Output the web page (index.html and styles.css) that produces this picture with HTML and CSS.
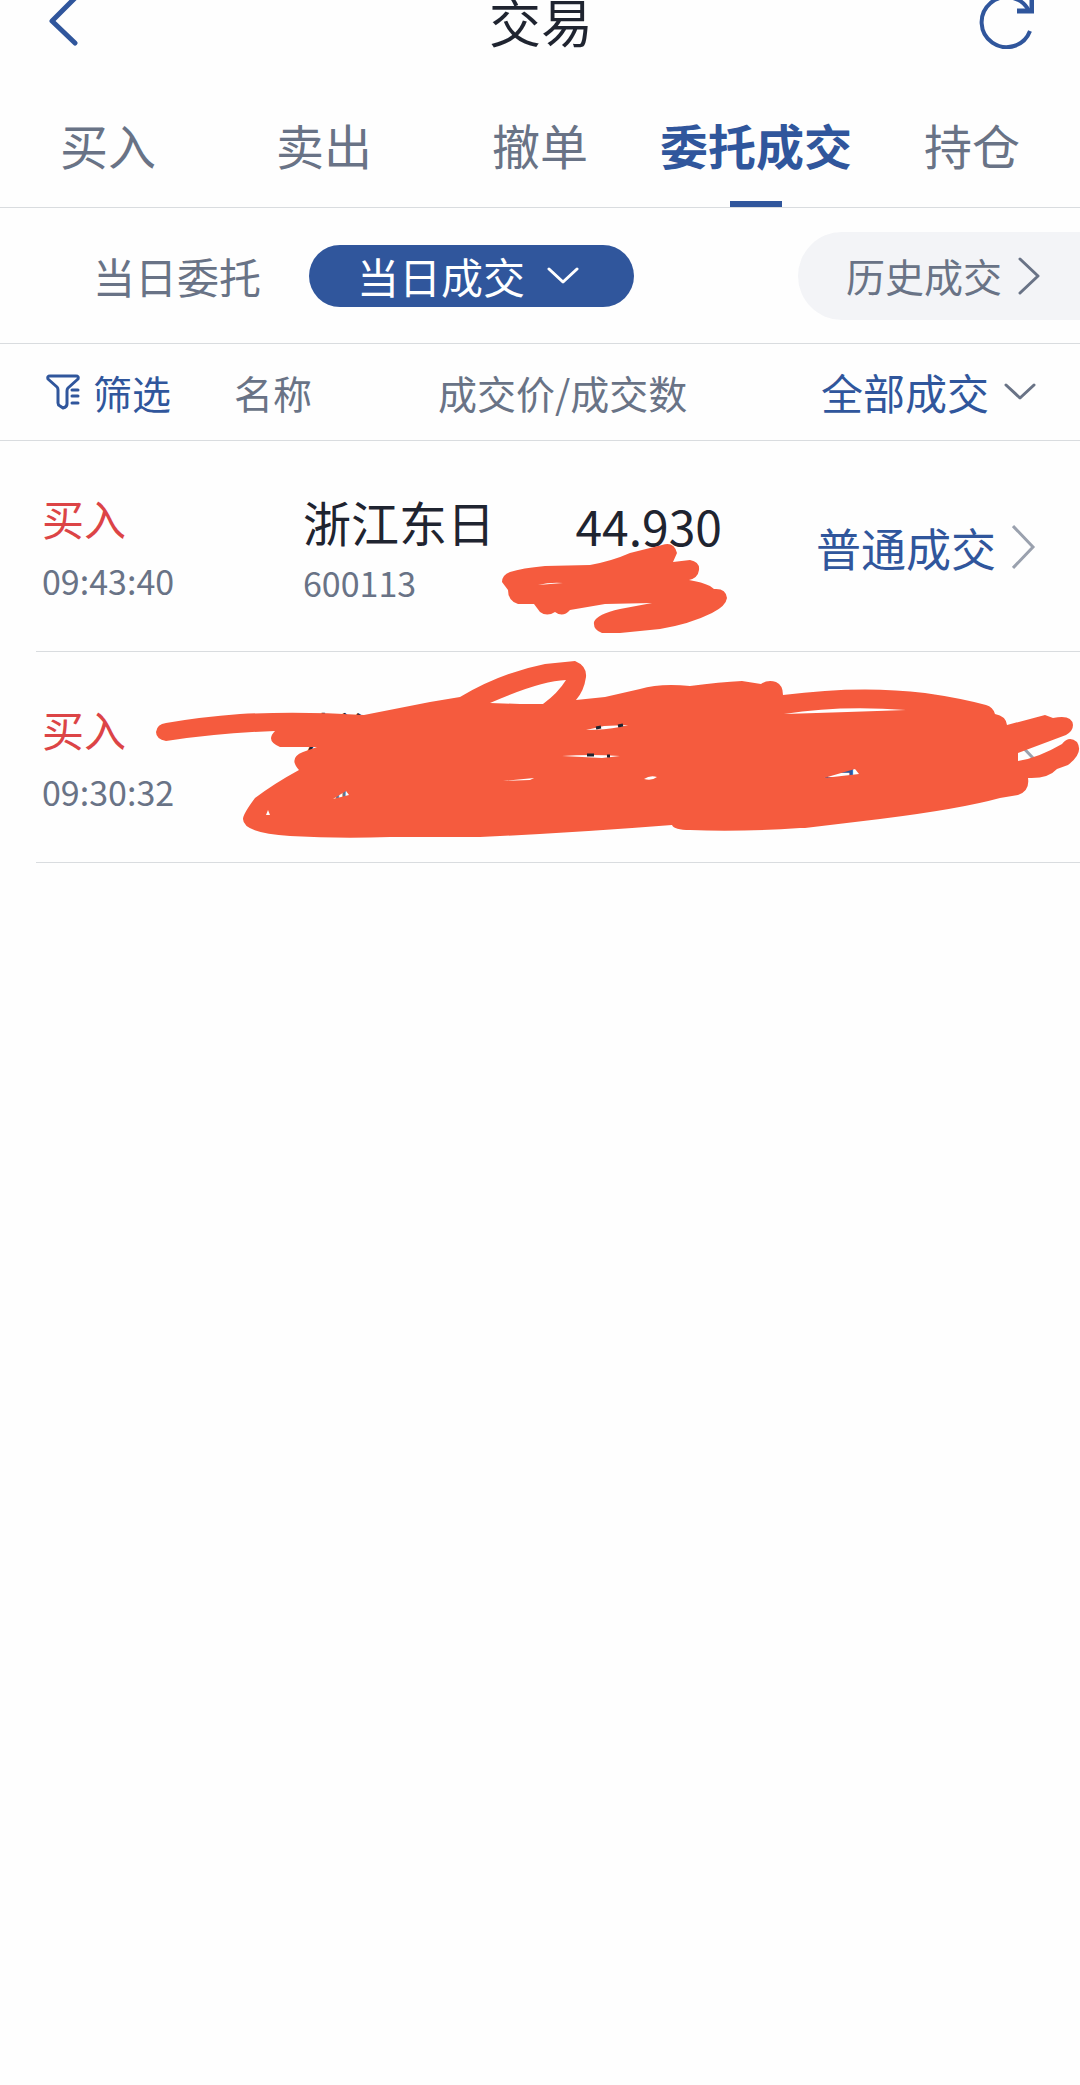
FILE: index.html
```
<!DOCTYPE html>
<html lang="zh-CN">
<head>
    <meta charset="UTF-8">
    <meta name="viewport" content="width=device-width, initial-scale=1.0">
    <title>交易</title>
    <link rel="stylesheet" href="styles.css">
</head>
<body>
    <header class="header">
        <button class="icon-btn" aria-label="返回">
            <svg width="30" height="52" viewBox="0 0 30 52" fill="none" stroke="currentColor" stroke-width="5" stroke-linecap="round" stroke-linejoin="round"><path d="M27 3L4 26l23 22"/></svg>
        </button>
        <h1>交易</h1>
        <button class="icon-btn" aria-label="刷新">
            <svg width="56" height="56" viewBox="0 0 56 56" fill="none" stroke="currentColor" stroke-width="4"><path d="M52 38A25 25 0 1 1 51 18"/><path d="M54 4v14H39" stroke-width="5"/></svg>
        </button>
    </header>

    <nav class="tabs">
        <a href="#">买入</a>
        <a href="#">卖出</a>
        <a href="#">撤单</a>
        <a href="#" class="active">委托成交</a>
        <a href="#">持仓</a>
    </nav>

    <div class="switcher">
        <button class="switch-btn">当日委托</button>
        <button class="switch-btn active">
            当日成交
            <svg width="32" height="18" viewBox="0 0 32 18" fill="none" stroke="currentColor" stroke-width="3" stroke-linecap="round" stroke-linejoin="round"><path d="M2 2l14 13L30 2"/></svg>
        </button>
        <a href="#" class="history">
            历史成交
            <svg width="22" height="40" viewBox="0 0 22 40" fill="none" stroke="currentColor" stroke-width="3" stroke-linecap="round" stroke-linejoin="round"><path d="M2 3l18 17L2 37"/></svg>
        </a>
    </div>

    <div class="columns">
        <button class="filter">
            <svg width="34" height="36" viewBox="0 0 34 36" fill="none" stroke="currentColor" stroke-width="3" stroke-linecap="round" stroke-linejoin="round"><path d="M22 14l10-9q1-3-2-3H4Q1 2 2 5l9 8q1 1 1 3v13q0 2 2 3l3 2q4-1 4-4V17q0-2 1-3M26 16h6M26 22h6M26 29h6"/></svg>
            筛选
        </button>
        <span>名称</span>
        <span class="col-price">成交价/成交数</span>
        <button class="type-btn">
            全部成交
            <svg width="32" height="18" viewBox="0 0 32 18" fill="none" stroke="currentColor" stroke-width="3" stroke-linecap="round" stroke-linejoin="round"><path d="M2 2l14 13L30 2"/></svg>
        </button>
    </div>

    <main class="deals">
        <div class="deal">
            <div class="side">
                <div class="action">买入</div>
                <div class="sub">09:43:40</div>
            </div>
            <div class="stock">
                <div class="name">浙江东日</div>
                <div class="sub">600113</div>
            </div>
            <div class="price">44.930</div>
            <a href="#" class="status">
                普通成交
                <svg width="24" height="46" viewBox="0 0 24 46" fill="none" stroke="currentColor" stroke-width="3"><path d="M1 2l20 21L1 44"/></svg>
            </a>
            <svg class="mark" viewBox="0 440 1080 212" fill="currentColor" fill-rule="evenodd"><path d="M502 581Q502 574 510 571Q522 567 545 565L590 564Q612 560 630 552L662 544Q674 540 677 552L673 561L690 559Q700 561 699 569Q698 577 689 579Q702 581 710 585L714 588Q726 587 727 597Q726 605 712 612Q690 623 660 628L620 632H602Q593 629 594 621Q597 613 620 608L652 602L605 603L570 609Q563 617 555 611Q547 616 540 611L534 603H518Q508 600 508 589ZM538 584Q550 581 563 582Q550 583 538 584Z"/></svg>
        </div>

        <div class="deal">
            <div class="side">
                <div class="action">买入</div>
                <div class="sub">09:30:32</div>
            </div>
            <div class="stock">
                <div class="name">浙江东日</div>
                <div class="sub">600113</div>
            </div>
            <div class="price"></div>
            <a href="#" class="status">
                普通成交
                <svg width="24" height="46" viewBox="0 0 24 46" fill="none" stroke="currentColor" stroke-width="3"><path d="M1 2l20 21L1 44"/></svg>
            </a>
            <svg class="mark" viewBox="0 651 1080 212" fill="currentColor" fill-rule="evenodd">
                <path d="M166 740Q156 738 156 731Q157 723 166 722Q200 716 240 713Q300 710 364 714L430 701L460 696Q500 672 545 663L575 660Q587 665 586 676Q584 690 576 699L605 696L640 688Q660 682 690 685Q720 681 742 680L761 683Q768 678 776 681Q783 684 783 694Q860 684 925 692Q960 697 986 704Q993 706 995 713Q1006 715 1007 724L1045 714L1053 717Q1072 713 1073 724Q1073 730 1066 734L1018 752V760Q1038 757 1062 743Q1069 734 1077 741Q1084 752 1068 764L1057 768Q1048 778 1028 777Q1030 790 1018 794L1000 797Q960 808 880 818L805 827H800Q740 831 690 829Q674 829 672 824Q570 832 480 836H390Q340 838 290 835Q243 832 243 818Q243 813 255 797Q275 782 299 769Q288 757 303 751L317 746H280Q265 740 275 730Q220 732 166 740ZM490 702L520 703H543Q558 692 566 679Q540 680 490 702ZM784 713Q840 704 906 709Q850 711 784 713ZM586 729L604 725L628 724L620 726Q605 729 586 729ZM562 755Q590 753 620 755L602 757ZM503 780L534 777L530 779ZM644 778Q650 774 657 776Q652 780 644 778ZM333 798L346 790L349 794ZM266 814L268 809L270 814ZM824 777L855 768L859 773Z"/>
                <path class="ink" d="M596 727l5-1M618 725l5-1M587 754h7M607 755h3"/>
            </svg>
        </div>
    </main>
</body>
</html>
```
FILE: styles.css
```
* {
    margin: 0;
    padding: 0;
    box-sizing: border-box;
}

body {
    font-family: "Noto Sans CJK SC", sans-serif;
    font-size: 39px;
    line-height: 1;
    color: #697386;
    background: #fefefe;
    overflow-x: hidden;
}

button {
    font: inherit;
    color: inherit;
    background: none;
    border: none;
    cursor: pointer;
}

a {
    color: inherit;
    text-decoration: none;
}

svg {
    flex-shrink: 0;
}

/* The bar is scrolled slightly under the top edge */
.header {
    display: grid;
    grid-template-columns: 1fr auto 1fr;
    align-items: center;
    height: 86px;
    margin-top: -22px;
    padding: 0 46px 0 48px;
}

.header h1 {
    font-size: 52px;
    font-weight: 400;
    color: #1f2430;
}

.icon-btn {
    display: flex;
    color: #30569c;
}

.icon-btn:last-child {
    justify-self: end;
}

.tabs {
    display: flex;
    height: 144px;
    border-bottom: 1px solid #d9dcdf;
}

.tabs a {
    position: relative;
    flex: 1;
    padding-top: 56px;
    font-size: 48px;
    text-align: center;
    white-space: nowrap;
}

.tabs .active {
    font-weight: 700;
    color: #30569c;
}

.tabs .active::after {
    content: "";
    position: absolute;
    left: 50%;
    bottom: 0;
    width: 52px;
    height: 6px;
    margin-left: -26px;
    background: #30569c;
}

.switcher {
    display: flex;
    align-items: center;
    height: 136px;
    padding-left: 45px;
    border-bottom: 1px solid #d9dcdf;
}

.switch-btn {
    display: flex;
    align-items: center;
    gap: 22px;
    height: 62px;
    padding: 0 48px;
    border-radius: 31px;
    font-size: 42px;
}

.switch-btn.active {
    padding-right: 55px;
    color: #fff;
    background: #30569c;
}

.history {
    display: flex;
    align-items: center;
    gap: 16px;
    height: 88px;
    margin-left: auto;
    padding: 0 40px 0 48px;
    border-radius: 44px 0 0 44px;
    background: #f3f4f7;
}

.columns {
    display: flex;
    align-items: center;
    height: 97px;
    padding: 0 44px 0 46px;
    border-bottom: 1px solid #d9dcdf;
}

.filter {
    display: flex;
    align-items: center;
    gap: 13px;
    margin-right: 63px;
    color: #30569c;
}

.col-price {
    margin-left: 126px;
}

.type-btn {
    display: flex;
    align-items: center;
    gap: 15px;
    margin-left: auto;
    font-size: 42px;
    color: #30569c;
}

.type-btn svg {
    color: #697386;
}

.deal {
    position: relative;
    display: flex;
    height: 211px;
    margin-left: 36px;
    padding: 56px 44px 0 6px;
    border-bottom: 1px solid #d9dcdf;
}

.side {
    width: 261px;
}

.action {
    margin-bottom: 25px;
    font-size: 42px;
    color: #dc4446;
}

.sub {
    font-size: 34px;
}

.name {
    margin-bottom: 21px;
    font-size: 48px;
    color: #1f2430;
}

.price {
    flex: 1;
    padding: 4px 46px 0 0;
    font-size: 48px;
    text-align: right;
    color: #1f2430;
}

.status {
    display: flex;
    align-items: center;
    gap: 16px;
    height: 100px;
    margin-left: 48px;
    font-size: 45px;
    color: #30569c;
}

.status svg {
    color: #9aa1ae;
}

/* Marker strokes over the private values */
.mark {
    position: absolute;
    right: 0;
    top: 0;
    width: 1080px;
    height: 212px;
    color: #f55b3e;
    pointer-events: none;
}

.ink {
    fill: none;
    stroke: #1f2430;
    stroke-width: 3;
}
```
